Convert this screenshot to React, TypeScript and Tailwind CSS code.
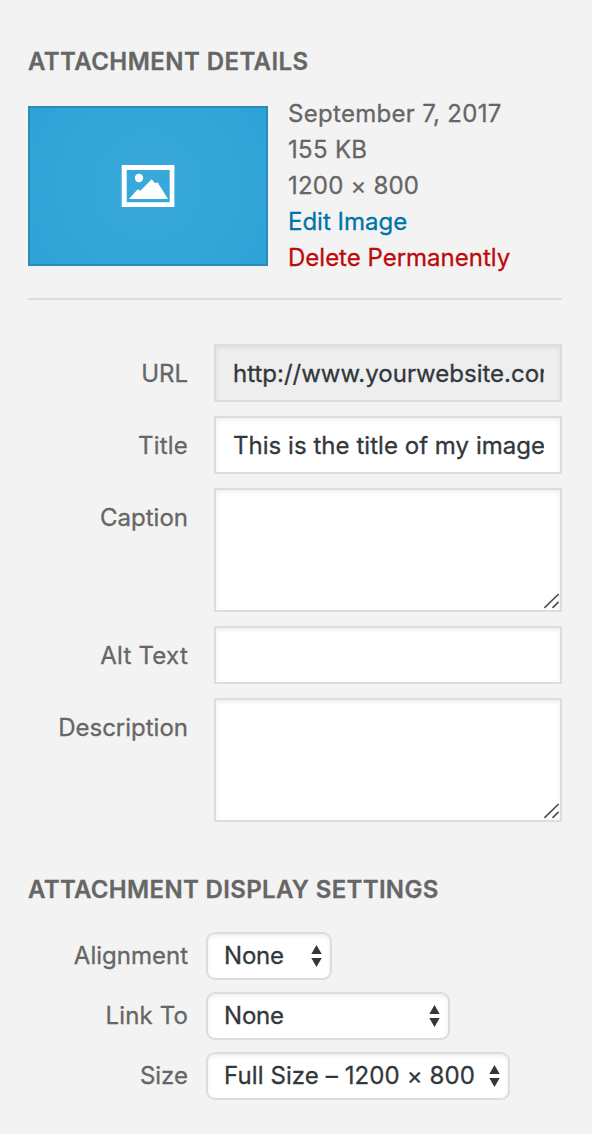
import type { ReactNode } from "react";

function FieldRow({ label, tall, children }: { label: ReactNode; tall?: boolean; children: ReactNode }) {
  return (
    <label className={tall ? "flex h-[124px] items-start" : "flex h-[58px] items-start"}>
      <span className="mr-[26px] flex h-[58px] w-[160px] items-center justify-end pt-[2px]">{label}</span>
      {children}
    </label>
  );
}

const control =
  "block w-[348px] rounded-none border-2 border-[#ddd] pr-4 pl-[17px] text-[#32373c] shadow-[inset_0_2px_4px_rgba(0,0,0,0.07)] outline-none";

function Area() {
  return (
    <span className="relative block">
      <textarea className={`${control} h-[124px] resize-none bg-white`} />
      <svg className="absolute right-[2px] bottom-[2px]" width="17" height="17" viewBox="0 0 17 17" fill="none" stroke="#505050" strokeWidth="1.7">
        <path d="M1.4 14.900 15.600 1M9.500 14.900 15.600 8.900" />
      </svg>
    </span>
  );
}

function SelectRow({ label, text, width }: { label: ReactNode; text: ReactNode; width: string }) {
  return (
    <div className="flex h-12 items-center">
      <span className="mr-[18px] w-[160px] text-right">{label}</span>
      <button
        type="button"
        className={`${width} flex h-12 items-center justify-between rounded-[9px] border-2 border-[#ddd] bg-white pr-[7px] pl-4 text-left whitespace-nowrap text-[#32373c] shadow-[inset_0_2px_4px_rgba(0,0,0,0.07)]`}
      >
        {text}
        <svg width="12" height="22" viewBox="0 0 12 22" fill="#32373c">
          <path d="M5.500 0 10.700 9H.3ZM.3 13h10.400L5.500 22Z" />
        </svg>
      </button>
    </div>
  );
}

export default function App() {
  return (
    <main className="h-[1134px] w-[592px] overflow-hidden bg-[#f3f3f3] px-7 pt-[44px] font-['Inter',sans-serif] text-[24px] leading-9 text-[#666] [-webkit-text-stroke:0.3px_currentColor] [font-feature-settings:'calt'_0]">
      <h2 className="h-9 text-[24px] font-semibold tracking-[0.44px] whitespace-nowrap">ATTACHMENT DETAILS</h2>
      <section className="mt-[15px] flex h-[205px] w-[534px] border-b-2 border-[#ddd]">
        <div className="mt-[11px] flex h-[160px] w-[240px] items-center justify-center border-2 border-[#298cba] bg-[radial-gradient(circle,#39a9db,#2fa2d5)]">
          <svg width="54" height="42" viewBox="0 0 54 42" fill="#fff">
            <path fillRule="evenodd" d="M.7 0h52.700v42H.7ZM5.700 5v32.300h43V5Z" />
            <circle cx="18" cy="13" r="4.200" />
            <path d="M8 34 16.700 24.300 19.400 25.700 30.700 14.300 34 18.300 36.700 17.500 47 34Z" />
          </svg>
        </div>
        <div className="ml-5 pt-px whitespace-nowrap">
          <p className="tracking-[0.3px]">September 7, 2017</p>
          <p className="tracking-[0.3px]">155 KB</p>
          <p className="tracking-[0.2px]">1200 × 800</p>
          <p><a className="text-[#0073aa]">Edit Image</a></p>
          <p><a className="text-[#bc0b0b]">Delete Permanently</a></p>
        </div>
      </section>
      <section className="mt-11 flex w-[534px] flex-col gap-[14px]">
        <FieldRow label="URL">
          <input readOnly className={`${control} h-[58px] bg-[#eee]`} defaultValue="http://www.yourwebsite.com" />
        </FieldRow>
        <FieldRow label={<span className="tracking-[0.2px]">Title</span>}>
          <input className={`${control} h-[58px] bg-white tracking-[0.04px]`} defaultValue="This is the title of my image" />
        </FieldRow>
        <FieldRow tall label="Caption"><Area /></FieldRow>
        <FieldRow label={<span className="tracking-[0.25px]">Alt Text</span>}>
          <input className={`${control} h-[58px] bg-white`} />
        </FieldRow>
        <FieldRow tall label="Description"><Area /></FieldRow>
      </section>
      <h2 className="mt-[50px] h-9 text-[24px] font-semibold tracking-[0.34px] whitespace-nowrap">ATTACHMENT DISPLAY SETTINGS</h2>
      <section className="mt-[24px] flex flex-col gap-3">
        <SelectRow label="Alignment" text={<span className="tracking-[-0.2px]">None</span>} width="w-[126px]" />
        <SelectRow label={<span className="tracking-[0.15px]">Link To</span>} text={<span className="tracking-[-0.2px]">None</span>} width="w-[244px]" />
        <SelectRow label="Size" text={<span className="tracking-[0.1px]">Full Size – 1200 × 800</span>} width="w-[304px]" />
      </section>
    </main>
  );
}
